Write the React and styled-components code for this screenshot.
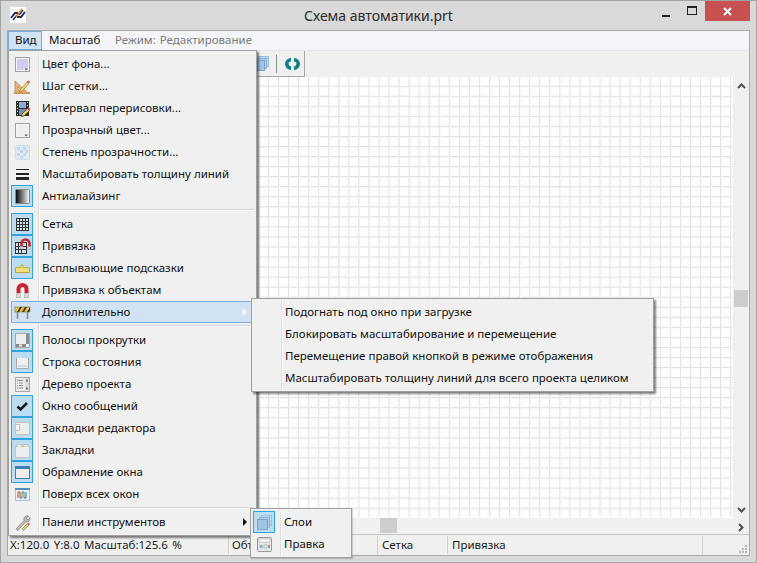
import React from 'react';
import styled, { createGlobalStyle } from 'styled-components';

const GlobalStyle = createGlobalStyle`
  html, body {
    margin: 0;
    padding: 0;
    background: #d9d9d9;
  }
  body {
    font-family: "Noto Sans", "Open Sans", sans-serif;
    font-size: 11.5px;
    color: #111;
  }
`;

const Window = styled.div`
  position: relative;
  width: 757px;
  height: 563px;
  box-sizing: border-box;
  display: flex;
  flex-direction: column;
  background: #d9d9d9;
  border: 1px solid #a3a3a3;
  border-bottom-color: #a8a8a8;
  overflow: hidden;
`;

const TitleBar = styled.div`
  height: 29px;
  flex: none;
  display: flex;
  align-items: flex-start;
  position: relative;
`;

const AppLogo = styled.div`
  width: 16px;
  height: 16px;
  margin: 6px 0 0 9px;
  background: #fff;
`;

const Title = styled.div`
  position: absolute;
  left: 0;
  right: 0;
  top: 5px;
  text-align: center;
  font-size: 14px;
  line-height: 20px;
  color: #2b2b2b;
`;

const WindowButtons = styled.div`
  margin-left: auto;
  margin-right: 6px;
  display: flex;
  align-items: flex-start;
`;

const CaptionButton = styled.div`
  width: ${p => p.$w}px;
  height: 20px;
  display: flex;
  align-items: center;
  justify-content: center;
  background: ${p => p.$close ? '#c75050' : 'transparent'};
`;

const Client = styled.div`
  flex: 1;
  display: flex;
  flex-direction: column;
  margin: 0 6px 6px 6px;
  border: 1px solid #a9a9a9;
  background: #f0f0f0;
  min-height: 0;
`;

const MenuBar = styled.div`
  height: 19px;
  flex: none;
  display: flex;
  align-items: center;
  background: #f4f5f8;
  border-bottom: 1px solid #e6e6e6;
`;

const MenuTitle = styled.div`
  width: ${p => p.$w}px;
  height: 19px;
  box-sizing: border-box;
  padding: 0 0 2px 6px;
  display: flex;
  align-items: center;
  background: ${p => p.$active ? '#cfe3f5' : 'transparent'};
  border: 1px solid ${p => p.$active ? '#79ace0' : 'transparent'};
`;

const ModeLabel = styled.div`
  color: #7a7a7a;
  word-spacing: 1px;
  padding-bottom: 2px;
`;

const ToolbarRow = styled.div`
  height: 26px;
  flex: none;
  display: flex;
`;

const Toolbar = styled.div`
  width: 297px;
  box-sizing: border-box;
  display: flex;
  align-items: center;
  justify-content: flex-end;
  gap: 6px;
  padding-right: 2px;
  border-right: 1px solid #a9a9a9;
  border-bottom: 1px solid #a9a9a9;
`;

const ToolDivider = styled.div`
  width: 1px;
  height: 18px;
  background: #8c8c8c;
`;

const Workspace = styled.div`
  flex: 1;
  min-height: 0;
  display: grid;
  grid-template-columns: 1fr 15px;
  grid-template-rows: 1fr 17px;
`;

const Canvas = styled.div`
  background-color: #fff;
  background-image:
    linear-gradient(to right, #e2e2e2 0, #e2e2e2 1px, #f8f8f8 1px, #f8f8f8 2px, transparent 2px),
    linear-gradient(to bottom, #dfdfdf 0, #dfdfdf 1px, #f7f7f7 1px, #f7f7f7 2px, transparent 2px);
  background-size: 10.05px 10.05px;
  background-position: 8.8px 8.7px;
  margin-right: 1px;
`;

const VScroll = styled.div`
  position: relative;
  background: #f0f0f0;
`;

const VThumb = styled.div`
  position: absolute;
  left: 0;
  right: 1px;
  top: 213px;
  height: 17px;
  background: #cdcdcd;
`;

const HScroll = styled.div`
  position: relative;
  background: #f0f0f0;
  border-top: 1px solid #fff;
  box-sizing: border-box;
`;

const HThumb = styled.div`
  position: absolute;
  left: 372px;
  top: 0;
  width: 17px;
  bottom: 1px;
  background: #cdcdcd;
`;

const ScrollArrow = styled.svg`
  position: absolute;
  left: ${p => p.$x}px;
  top: ${p => p.$y}px;
`;

const Corner = styled.div`
  background: #f0f0f0;
`;

const StatusBar = styled.div`
  height: 20px;
  flex: none;
  display: flex;
  align-items: center;
  border-top: 1px solid #c4c4c4;
  background: #f0f0f0;
  position: relative;
`;

const StatusCell = styled.div`
  width: ${p => p.$w}px;
  height: 18px;
  box-sizing: border-box;
  padding-left: ${p => p.$pad}px;
  padding-bottom: 2px;
  display: flex;
  align-items: center;
  white-space: pre;
  word-spacing: 1.5px;
  overflow: hidden;
  border-right: ${p => p.$last ? 'none' : '1px solid #cfcfcf'};
  color: #1a1a1a;
`;

const Grip = styled.svg`
  position: absolute;
  right: 1px;
  bottom: 1px;
`;

const Popup = styled.div`
  position: absolute;
  left: ${p => p.$x}px;
  top: ${p => p.$y}px;
  width: ${p => p.$w}px;
  box-sizing: border-box;
  padding: 2px 0;
  background: #f0f0f0;
  border: 1px solid #a0a0a0;
  box-shadow: ${p => p.$flat ? '1px 1px 1px rgba(0,0,0,.15)' : '2px 2px 2px rgba(0,0,0,.5)'};
  z-index: ${p => p.$z};

  &::before {
    content: '';
    position: absolute;
    left: ${p => p.$col}px;
    top: 2px;
    bottom: 2px;
    width: 1px;
    background: #dedede;
    box-shadow: 1px 0 0 #fafafa;
  }
`;

const MenuRow = styled.div`
  position: relative;
  height: 22px;
  box-sizing: border-box;
  margin: 0 2px;
  display: flex;
  align-items: center;
  background: ${p => p.$active ? '#d1e2f2' : 'transparent'};
  outline: ${p => p.$active ? '1px solid #78aee5' : 'none'};
  outline-offset: -1px;
  z-index: 1;
`;

const IconSlot = styled.div`
  width: 22px;
  height: 22px;
  flex: none;
  box-sizing: border-box;
  display: flex;
  align-items: center;
  justify-content: center;
  background: ${p => p.$on ? '#bcdcf0' : 'transparent'};
  border: 1px solid ${p => p.$on ? '#33a3e0' : 'transparent'};
`;

const Label = styled.span`
  margin-left: ${p => p.$gap}px;
  margin-top: -2px;
  white-space: nowrap;
`;

const SubArrow = styled.svg`
  position: absolute;
  right: 6px;
  top: 7px;
`;

const Separator = styled.div`
  height: 1px;
  margin: 2px 2px 3px 31px;
  background: #d7d7d7;
  box-shadow: 0 1px 0 #f9f9f9;
`;

const SubRow = styled.div`
  height: 22px;
  box-sizing: border-box;
  padding: 0 0 2px 33px;
  display: flex;
  align-items: center;
  white-space: nowrap;
`;

const Logo = () => (
  <svg width="16" height="16" viewBox="0 0 16 16">
    <path d="M1 11 L5 6 L8 6 M7 10 L11 10 L15 5" fill="none" stroke="#1d2a5c" strokeWidth="2" />
    <path d="M3 13 L7 8 M9 8 L13 3" fill="none" stroke="#1d2a5c" strokeWidth="1.4" />
    <path d="M6 10 L12 2" stroke="#e58a1f" strokeWidth="1.6" />
  </svg>
);

const Pencil = () => (
  <g>
    <path d="M8 14 L13.5 8.5 L15.5 10.5 L10 16 L7.5 16.5 Z" fill="#f2d34a" stroke="#333" strokeWidth=".7" />
    <path d="M13.5 8.5 L14.8 7.2 L16.5 9 L15.5 10.5 Z" fill="#e0455a" />
  </g>
);

const Swatch = ({ fill }) => (
  <g>
    <rect x="1.5" y="1.5" width="14" height="14" fill="#f6f6f6" stroke="#a0a0a0" />
    <rect x="3" y="3" width="11" height="11" fill={fill} />
    <path d="M9.5 12 H15 V15 H9.5 Z" fill="#f0f0f0" />
    <path d="M10.5 12.5 H14 L12.2 14.5 Z" fill="#555" />
  </g>
);

const Window16 = ({ children }) => (
  <g>
    <rect x="1.5" y="1.5" width="14" height="14" fill="#eeeeee" stroke="#a8a8a8" />
    {children}
  </g>
);

const icons = {
  background: <Swatch fill="#cfcbf0" />,
  grid: (
    <g>
      <path d="M1 3 L14 15 H1 Z M4 9 V12.5 H8 Z" fill="#e8b27a" fillRule="evenodd" stroke="#b87c40" strokeWidth=".7" />
      <path d="M0 15 H16" stroke="#d19a5c" strokeWidth="2" />
      <path d="M6 12 L13 4 L15 5.5 L8 13.5 L5.5 14 Z" fill="#f2d34a" stroke="#666" strokeWidth=".5" />
      <path d="M13 4 L14.2 2.6 L16 4 L15 5.5 Z" fill="#e0455a" />
    </g>
  ),
  film: (
    <g>
      <rect x="2" y="1" width="13" height="15" fill="#2c2c2c" />
      <rect x="5" y="2" width="7" height="6" fill="#8cacd4" />
      <rect x="5" y="9" width="7" height="6" fill="#6c90bf" />
      <path d="M3 2.5 H4 M3 5.5 H4 M3 8.5 H4 M3 11.5 H4 M3 14.5 H4 M13 2.5 H14 M13 5.5 H14" stroke="#ddd" />
      <Pencil />
    </g>
  ),
  transparent: <Swatch fill="#eeeeee" />,
  opacity: (
    <g>
      <rect x="1.5" y="1.5" width="14" height="14" rx="2" fill="#e0eaf6" stroke="#cfdcea" />
      <path d="M3 3 H6 V6 H3 Z M9 3 H12 V6 H9 Z M6 6 H9 V9 H6 Z M12 6 H14 V9 H12 Z M3 9 H6 V12 H3 Z M9 9 H12 V12 H9 Z M6 12 H9 V14 H6 Z" fill="#c3d5e9" />
    </g>
  ),
  lines: (
    <g fill="#222">
      <rect x="2" y="3" width="13" height="1" />
      <rect x="2" y="7" width="13" height="2" />
      <rect x="2" y="11" width="13" height="3" />
    </g>
  ),
  antialias: (
    <g>
      <defs>
        <linearGradient id="aa-grad">
          <stop offset="0" stopColor="#000" />
          <stop offset="1" stopColor="#fff" />
        </linearGradient>
      </defs>
      <rect x="1.5" y="1.5" width="14" height="14" rx="1" fill="url(#aa-grad)" stroke="#8a8a8a" />
    </g>
  ),
  gridOn: (
    <g>
      <rect x="2.5" y="2.5" width="12" height="12" fill="#cfe3ef" stroke="#333" />
      <path d="M5.5 2.5 V14.5 M8.5 2.5 V14.5 M11.5 2.5 V14.5 M2.5 5.5 H14.5 M2.5 8.5 H14.5 M2.5 11.5 H14.5" stroke="#333" />
    </g>
  ),
  snap: (
    <g>
      <rect x="1.5" y="4.5" width="11" height="11" fill="#cfe3ef" stroke="#333" />
      <path d="M4.5 4.5 V15.5 M7.5 4.5 V15.5 M1.5 8.5 H12.5 M1.5 11.5 H12.5" stroke="#333" />
      <path d="M7.5 10 V5.5 A4 4 0 0 1 15.5 5.5 V10" fill="none" stroke="#c9252c" strokeWidth="2.6" />
      <path d="M6 8.5 H9 V11 H6 Z M14 8.5 H17 V11 H14 Z" fill="#ddd" stroke="#888" strokeWidth=".4" />
    </g>
  ),
  tooltip: (
    <g>
      <path d="M1.5 7.5 H7 V5 H9 V7.5 H15.5 V12.5 H1.5 Z" fill="#efe07a" stroke="#bda93a" />
    </g>
  ),
  magnet: (
    <g>
      <path d="M4.5 11 V7 A4 4 0 0 1 12.5 7 V11" fill="none" stroke="#c9252c" strokeWidth="4" />
      <path d="M2.5 11.5 H6.5 V15.5 H2.5 Z M10.5 11.5 H14.5 V15.5 H10.5 Z" fill="#d6d6d6" stroke="#aaa" strokeWidth=".6" />
    </g>
  ),
  barrier: (
    <g>
      <rect x="1" y="3" width="15" height="5" fill="#f0c23a" stroke="#7a6a3a" strokeWidth=".6" />
      <path d="M3 8 L6 3 H8 L5 8 Z M8 8 L11 3 H13 L10 8 Z M13 8 L16 3 V6 L15 8 Z" fill="#333" />
      <path d="M3.5 8 V15 M13.5 8 V15" stroke="#888" strokeWidth="1.6" />
    </g>
  ),
  scrollbars: (
    <Window16>
      <rect x="12" y="2" width="3" height="13" fill="#8b8b8b" />
      <rect x="2" y="12" width="13" height="3" fill="#8b8b8b" />
      <rect x="12" y="12" width="3" height="3" fill="#eee" />
      <rect x="5" y="12.5" width="3" height="2" fill="#eee" />
    </Window16>
  ),
  statusbar: (
    <g>
      <path d="M2.5 4 V14.5 H14.5 V4" fill="#eee" stroke="#a8a8a8" />
      <rect x="4" y="11" width="9" height="2" fill="#cfd6dc" />
    </g>
  ),
  tree: (
    <Window16>
      <path d="M4 4.5 H9 M5 7 H9 M5 9.5 H9 M5 12 H9" stroke="#888" />
      <path d="M3 4 H4 M3 7 H4 M3 10 H4 M3 12 H4" stroke="#58a058" />
      <rect x="11" y="2" width="4" height="13" fill="#dcdcdc" />
      <path d="M12 4.5 H14 M12 12.5 H14" stroke="#777" strokeWidth="2" />
    </Window16>
  ),
  check: <path d="M3.5 8.5 L6.5 11.5 L13 5" fill="none" stroke="#1a1a1a" strokeWidth="2.6" />,
  tabsLeft: (
    <g>
      <rect x="1.5" y="2.5" width="14" height="12" fill="#eee" stroke="#c0c0c0" />
      <rect x="1.5" y="4.5" width="4" height="6" fill="#f8f8f8" stroke="#c0c0c0" />
    </g>
  ),
  tabsTop: (
    <g>
      <rect x="1.5" y="4.5" width="14" height="11" fill="#eee" stroke="#c0c0c0" />
      <path d="M3 4.5 V2.5 H8 V4.5 M10 4.5 V2.5 H14 V4.5" fill="#f8f8f8" stroke="#c0c0c0" />
    </g>
  ),
  frame: (
    <g>
      <rect x="1.5" y="2.5" width="14" height="12" fill="#eee" stroke="#3f7fb8" />
      <rect x="2" y="3" width="13" height="2" fill="#3f7fb8" />
    </g>
  ),
  onTop: (
    <g>
      <rect x="1.5" y="3.5" width="14" height="11" fill="#e8f3fc" stroke="#9ec3e2" />
      <rect x="1" y="2" width="15" height="2" fill="#4c8fc9" />
      <path d="M4 12 V6 H6 V12 H8" fill="none" stroke="#c04a2c" />
      <path d="M8 12 V6 H10 V12" fill="none" stroke="#3c9a56" />
      <path d="M10 12 H12 V6" fill="none" stroke="#3c5fb8" />
    </g>
  ),
  tools: (
    <g>
      <path d="M2 15 L10 6.5 A3.6 3.6 0 0 1 14.8 2 L12.5 4.5 L14 6 L16 3.6 A3.6 3.6 0 0 1 11.5 8 L3.8 16.5 Z" fill="#b9b9b9" stroke="#777" strokeWidth=".6" />
      <path d="M8 15 L13.5 9.5 L15 11 L9.5 16.5 Z" fill="#f2d34a" stroke="#555" strokeWidth=".5" />
      <path d="M13.5 9.5 L14.5 8.5 L16 10 L15 11 Z" fill="#e0455a" />
    </g>
  ),
  layers: (
    <g>
      <rect x="5.5" y="1.5" width="10" height="10" fill="#b8d6f0" stroke="#9bc0e0" />
      <rect x="3.5" y="3.5" width="10" height="10" fill="#aecdea" stroke="#8ab2d8" />
      <rect x="1.5" y="5.5" width="10" height="10" fill="#a2c4e4" stroke="#7ca6cf" />
    </g>
  ),
  edit: (
    <g>
      <rect x="1.5" y="1.5" width="14" height="14" rx="1" fill="#e6e6e6" stroke="#9a9a9a" />
      <rect x="3" y="3" width="11" height="3" fill="#fff" stroke="#aaa" strokeWidth=".6" />
      <rect x="3.5" y="9" width="3" height="3" fill="#7fb0df" />
      <rect x="8" y="9" width="3" height="3" fill="#fff" stroke="#999" strokeWidth=".6" />
      <rect x="12" y="9" width="2" height="3" fill="#999" />
    </g>
  ),
};

const Icon = ({ name }) => (
  <svg width="17" height="17" viewBox="0 0 17 17">{icons[name]}</svg>
);

const viewMenu = [
  [
    { icon: 'background', text: 'Цвет фона...' },
    { icon: 'grid', text: 'Шаг сетки...' },
    { icon: 'film', text: 'Интервал перерисовки...' },
    { icon: 'transparent', text: 'Прозрачный цвет...' },
    { icon: 'opacity', text: 'Степень прозрачности...' },
    { icon: 'lines', text: 'Масштабировать толщину линий' },
    { icon: 'antialias', text: 'Антиалайзинг', on: true },
  ],
  [
    { icon: 'gridOn', text: 'Сетка', on: true },
    { icon: 'snap', text: 'Привязка', on: true },
    { icon: 'tooltip', text: 'Всплывающие подсказки', on: true },
    { icon: 'magnet', text: 'Привязка к объектам' },
    { icon: 'barrier', text: 'Дополнительно', active: true, sub: true },
  ],
  [
    { icon: 'scrollbars', text: 'Полосы прокрутки', on: true },
    { icon: 'statusbar', text: 'Строка состояния', on: true },
    { icon: 'tree', text: 'Дерево проекта' },
    { icon: 'check', text: 'Окно сообщений', on: true },
    { icon: 'tabsLeft', text: 'Закладки редактора', on: true },
    { icon: 'tabsTop', text: 'Закладки', on: true },
    { icon: 'frame', text: 'Обрамление окна', on: true },
    { icon: 'onTop', text: 'Поверх всех окон' },
  ],
  [
    { icon: 'tools', text: 'Панели инструментов', sub: true },
  ],
];

const extraItems = [
  'Подогнать под окно при загрузке',
  'Блокировать масштабирование и перемещение',
  'Перемещение правой кнопкой в режиме отображения',
  'Масштабировать толщину линий для всего проекта целиком',
];

function MenuItem({ item }) {
  return (
    <MenuRow $active={item.active}>
      <IconSlot $on={item.on}><Icon name={item.icon} /></IconSlot>
      <Label $gap={9}>{item.text}</Label>
      {item.sub && (
        <SubArrow width="6" height="8" viewBox="0 0 6 8">
          <path d="M1 0 L5 4 L1 8 Z" fill={item.active ? '#fff' : '#111'} />
        </SubArrow>
      )}
    </MenuRow>
  );
}

export default function App() {
  return (
    <>
      <GlobalStyle />
      <Window>
        <TitleBar>
          <AppLogo><Logo /></AppLogo>
          <Title>Схема автоматики.prt</Title>
          <WindowButtons>
            <CaptionButton $w={26}>
              <svg width="10" height="14" viewBox="0 0 10 14"><rect x="1" y="11" width="8" height="2" fill="#222" /></svg>
            </CaptionButton>
            <CaptionButton $w={26}>
              <svg width="10" height="10" viewBox="0 0 10 10">
                <rect x=".5" y=".5" width="9" height="8" fill="none" stroke="#222" />
                <rect x="0" y="0" width="10" height="2" fill="#222" />
              </svg>
            </CaptionButton>
            <CaptionButton $w={45} $close>
              <svg width="9" height="9" viewBox="0 0 9 9">
                <path d="M1 1 L8 8 M8 1 L1 8" stroke="#fff" strokeWidth="2" />
              </svg>
            </CaptionButton>
          </WindowButtons>
        </TitleBar>

        <Client>
          <MenuBar>
            <MenuTitle $active $w={34}>Вид</MenuTitle>
            <MenuTitle $w={73}>Масштаб</MenuTitle>
            <ModeLabel>Режим: Редактирование</ModeLabel>
          </MenuBar>

          <ToolbarRow>
            <Toolbar>
              <Icon name="layers" />
              <ToolDivider />
              <svg width="19" height="14" viewBox="0 0 19 14">
                <path d="M8 1 A6 6 0 0 0 8 13 L8 9.5 A3 3 0 0 1 6 5 L8 4.5 Z" fill="#0e7f86" />
                <path d="M11 1 A6 6 0 0 1 11 13 L11 9.5 A3 3 0 0 0 13 5 L11 4.5 Z" fill="#0e7f86" />
              </svg>
            </Toolbar>
          </ToolbarRow>

          <Workspace>
            <Canvas />
            <VScroll>
              <ScrollArrow $x={3} $y={6} width="9" height="6" viewBox="0 0 9 6">
                <path d="M1 5 L4.5 1.5 L8 5" fill="none" stroke="#505050" strokeWidth="2" />
              </ScrollArrow>
              <VThumb />
              <ScrollArrow $x={3} $y={430} width="9" height="6" viewBox="0 0 9 6">
                <path d="M1 1 L4.5 4.5 L8 1" fill="none" stroke="#505050" strokeWidth="2" />
              </ScrollArrow>
            </VScroll>
            <HScroll>
              <HThumb />
              <ScrollArrow $x={730} $y={5} width="6" height="9" viewBox="0 0 6 9">
                <path d="M1 1 L4.5 4.5 L1 8" fill="none" stroke="#505050" strokeWidth="2" />
              </ScrollArrow>
            </HScroll>
            <Corner />
          </Workspace>

          <StatusBar>
            <StatusCell $w={221} $pad={2}>X:120.0 Y:8.0 Масштаб:125.6 %</StatusCell>
            <StatusCell $w={149} $pad={3}>Объектов выбрано 0</StatusCell>
            <StatusCell $w={70} $pad={4}>Сетка</StatusCell>
            <StatusCell $w={255} $pad={4}>Привязка</StatusCell>
            <StatusCell $last $w={46} $pad={4} />
            <Grip width="9" height="9" viewBox="0 0 9 9">
              <path d="M6 0 H8 V2 H6 Z M3 3 H5 V5 H3 Z M6 3 H8 V5 H6 Z M0 6 H2 V8 H0 Z M3 6 H5 V8 H3 Z M6 6 H8 V8 H6 Z" fill="#b5b5b5" />
            </Grip>
          </StatusBar>
        </Client>

        <Popup $x={7} $y={49} $w={249} $col={29} $z={2}>
          {viewMenu.map((group, i) => (
            <React.Fragment key={i}>
              {i > 0 && <Separator />}
              {group.map(item => <MenuItem key={item.text} item={item} />)}
            </React.Fragment>
          ))}
        </Popup>

        <Popup $x={250} $y={297} $w={403} $col={29} $z={3}>
          {extraItems.map(text => <SubRow key={text}>{text}</SubRow>)}
        </Popup>

        <Popup $x={249} $y={507} $w={102} $col={29} $z={3} $flat>
          <MenuRow>
            <IconSlot $on><Icon name="layers" /></IconSlot>
            <Label $gap={9}>Слои</Label>
          </MenuRow>
          <MenuRow>
            <IconSlot><Icon name="edit" /></IconSlot>
            <Label $gap={9}>Правка</Label>
          </MenuRow>
        </Popup>
      </Window>
    </>
  );
}
